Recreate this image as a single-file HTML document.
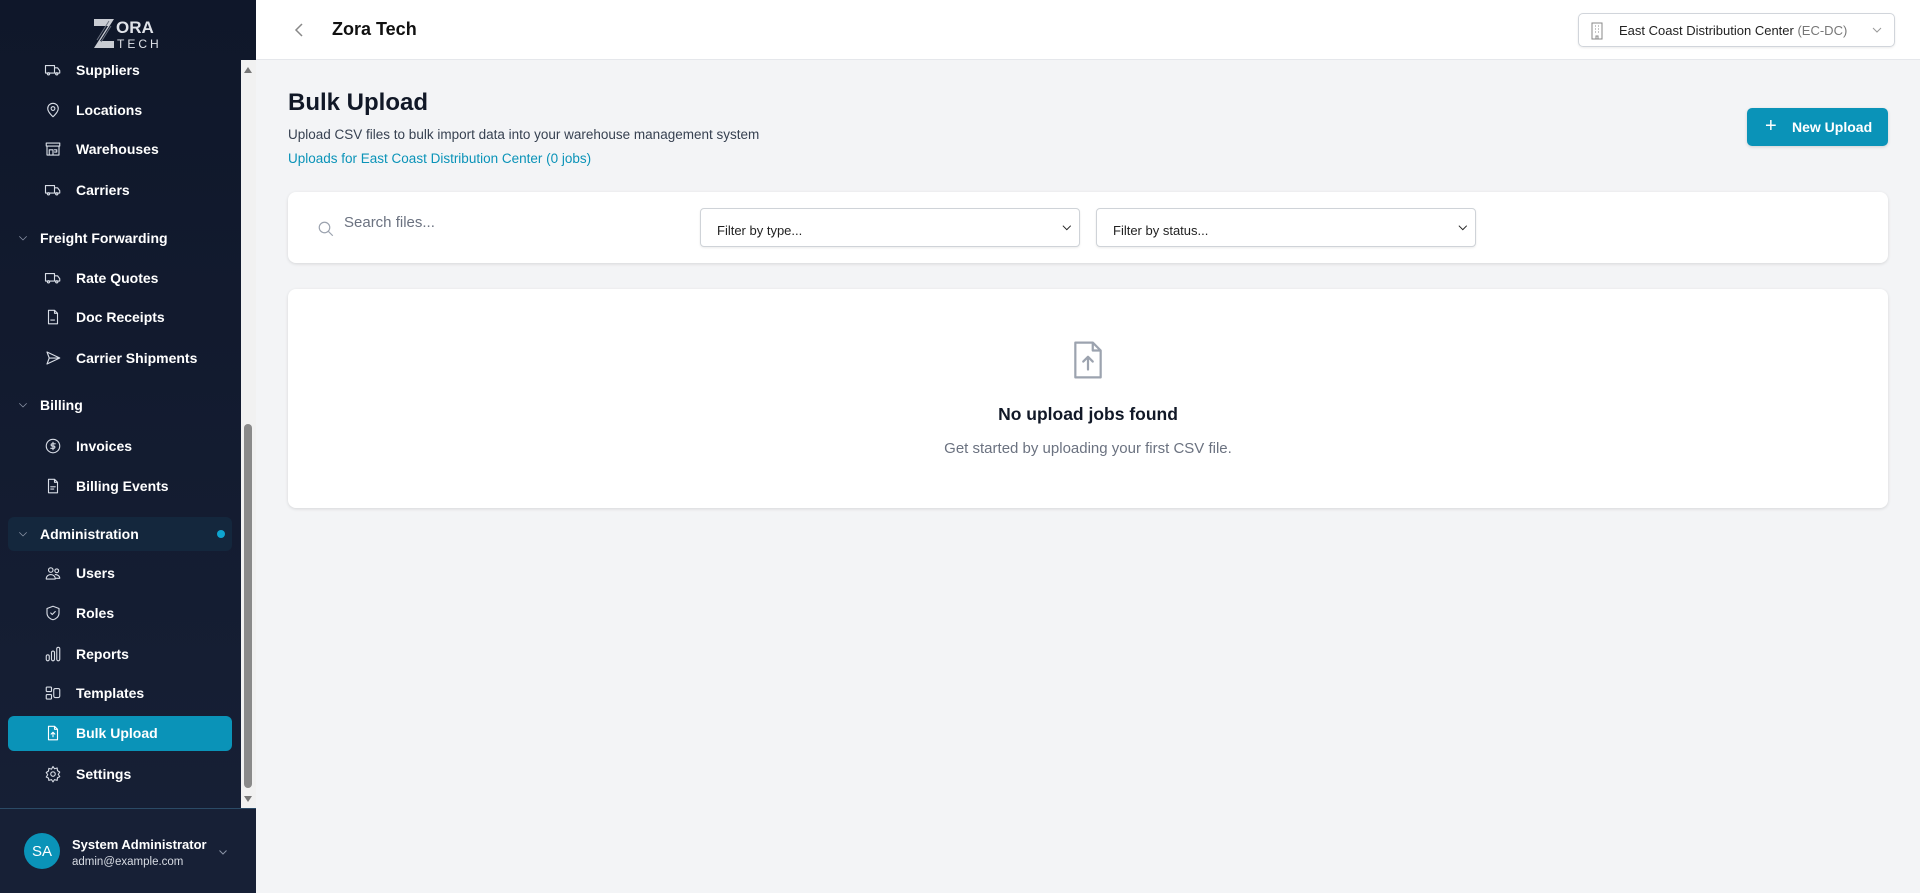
<!DOCTYPE html>
<html><head><meta charset="utf-8"><style>
*{box-sizing:border-box;margin:0;padding:0}
body{width:1920px;height:893px;overflow:hidden;font-family:"Liberation Sans",sans-serif;background:#f3f4f6;position:relative}
.sb{position:absolute;left:0;top:0;width:256px;height:893px;background:linear-gradient(#0f172a,#172036)}
.logo{position:absolute;left:92px;top:16px;width:74px;height:36px}
.scroll{position:absolute;left:241px;top:60px;width:15px;height:748px;background:#f1f1f1}
.thumb{position:absolute;left:244px;top:424px;width:8px;height:364px;background:#8a8a8a;border-radius:4px}
.item{position:absolute;left:0;height:34px;color:#fff;font-size:14px;font-weight:700;display:flex;align-items:center}
.item svg{position:absolute;left:44px;width:18px;height:18px;fill:none;stroke:#d8dde6;stroke-width:1.5;stroke-linecap:round;stroke-linejoin:round}
.item span{position:absolute;left:76px;white-space:nowrap}
.sec span{left:40px}
.sec svg{left:17px;width:12px;height:12px;stroke:#8b94a7}
.footer{position:absolute;left:0;top:808px;width:256px;height:85px;background:#172036;border-top:1px solid #2b4a66}
.hdr{position:absolute;left:256px;top:0;width:1664px;height:60px;background:#fff;border-bottom:1px solid #e5e7eb}
.card{position:absolute;background:#fff;border-radius:8px;box-shadow:0 1px 3px rgba(0,0,0,.12)}
.sel{position:absolute;top:16px;height:39px;border:1px solid #cfd3d8;border-radius:4px;background:#fff;box-shadow:0 1px 2px rgba(0,0,0,.08);font-size:13px;color:#222;padding:14px 16px}
.sel b{position:absolute;right:8px;top:12px;font-size:11px}
</style></head><body>
<div class="sb">
<svg class="logo" viewBox="0 0 74 36"><path d="M2 3h20l-14 22h14v7H2l14-22H2z" fill="#c9ccd3"/><path d="M5 24l12-19M9 26l10-16" stroke="#6b7280" stroke-width="1"/><text x="24" y="17" font-family="Liberation Sans" font-size="17" font-weight="700" fill="#dfe2e8">ORA</text><text x="25" y="32" font-family="Liberation Sans" font-size="12" fill="#dfe2e8" letter-spacing="3">TECH</text></svg>
<div class="item" style="top:53px"><svg viewBox="0 0 24 24"><path d="M2 6h12v10H2zM14 9h4l3 4v3h-7"/><circle cx="6" cy="17" r="1.5"/><circle cx="17" cy="17" r="1.5"/></svg><span>Suppliers</span></div>
<div class="item" style="top:93px"><svg viewBox="0 0 24 24"><path d="M12 21s-7-6-7-11a7 7 0 0114 0c0 5-7 11-7 11z"/><circle cx="12" cy="10" r="2.5"/></svg><span>Locations</span></div>
<div class="item" style="top:132px"><svg viewBox="0 0 24 24"><path d="M3 4h18v4H3zM4 8v12h16V8M7 20v-7h5v7M14 13h3v3h-3"/></svg><span>Warehouses</span></div>
<div class="item" style="top:173px"><svg viewBox="0 0 24 24"><path d="M2 6h12v10H2zM14 9h4l3 4v3h-7"/><circle cx="6" cy="17" r="1.5"/><circle cx="17" cy="17" r="1.5"/></svg><span>Carriers</span></div>
<div class="item sec" style="top:221px"><svg viewBox="0 0 24 24"><path d="M5 9l7 7 7-7"/></svg><span>Freight Forwarding</span></div>
<div class="item" style="top:261px"><svg viewBox="0 0 24 24"><path d="M2 6h12v10H2zM14 9h4l3 4v3h-7"/><circle cx="6" cy="17" r="1.5"/><circle cx="17" cy="17" r="1.5"/></svg><span>Rate Quotes</span></div>
<div class="item" style="top:300px"><svg viewBox="0 0 24 24"><path d="M6 3h8l4 4v14H6zM14 3v4h4M9 16h5"/></svg><span>Doc Receipts</span></div>
<div class="item" style="top:341px"><svg viewBox="0 0 24 24"><path d="M4 4l17 8-17 8 3-8zM7 12h14"/></svg><span>Carrier Shipments</span></div>
<div class="item sec" style="top:388px"><svg viewBox="0 0 24 24"><path d="M5 9l7 7 7-7"/></svg><span>Billing</span></div>
<div class="item" style="top:429px"><svg viewBox="0 0 24 24"><circle cx="12" cy="12" r="9"/><path d="M15 9h-4a1.5 1.5 0 000 3h2a1.5 1.5 0 010 3H9M12 7v10"/></svg><span>Invoices</span></div>
<div class="item" style="top:469px"><svg viewBox="0 0 24 24"><path d="M6 3h8l4 4v14H6zM14 3v4h4M9 13h6M9 16h4"/></svg><span>Billing Events</span></div>
<div style="position:absolute;left:8px;top:517px;width:224px;height:34px;background:#14273d;border-radius:6px"></div>
<div class="item sec" style="top:517px"><svg viewBox="0 0 24 24"><path d="M5 9l7 7 7-7"/></svg><span>Administration</span></div>
<div style="position:absolute;left:217px;top:530px;width:8px;height:8px;border-radius:50%;background:#0ea5d0"></div>
<div class="item" style="top:556px"><svg viewBox="0 0 24 24"><circle cx="9" cy="8" r="3"/><circle cx="17" cy="9" r="2.5"/><path d="M3 20c0-4 3-6 6-6s6 2 6 6zM15 14c3 0 6 2 6 5h-5"/></svg><span>Users</span></div>
<div class="item" style="top:596px"><svg viewBox="0 0 24 24"><path d="M12 3l8 3v6c0 5-4 8-8 9-4-1-8-4-8-9V6z"/><path d="M9 12l2 2 4-4"/></svg><span>Roles</span></div>
<div class="item" style="top:637px"><svg viewBox="0 0 24 24"><rect x="3" y="13" width="4" height="8" rx="2"/><rect x="10" y="8" width="4" height="13" rx="2"/><rect x="17" y="3" width="4" height="18" rx="2"/></svg><span>Reports</span></div>
<div class="item" style="top:676px"><svg viewBox="0 0 24 24"><rect x="3" y="4" width="7" height="6" rx="1"/><rect x="3" y="14" width="7" height="6" rx="1"/><rect x="13" y="6" width="8" height="12" rx="2"/></svg><span>Templates</span></div>
<div style="position:absolute;left:8px;top:716px;width:224px;height:35px;background:#0a93b8;border-radius:6px"></div>
<div class="item" style="top:716px"><svg viewBox="0 0 24 24" style="stroke:#fff"><path d="M6 3h8l4 4v14H6zM14 3v4h4M12 17v-6M9.5 13.5L12 11l2.5 2.5"/></svg><span>Bulk Upload</span></div>
<div class="item" style="top:757px"><svg viewBox="0 0 24 24"><circle cx="12" cy="12" r="3"/><path d="M12 2l2 3 3.5-1 .5 3.5 3 2-2 3 2 3-3 1.5-.5 3.5-3.5-1-2 3-2-3-3.5 1L6 17.5 3 16l2-3-2-3 3-2 .5-3.5 3.5 1z"/></svg><span>Settings</span></div>
<div class="scroll"></div><div class="thumb"></div>
<div style="position:absolute;left:244px;top:67px;width:0;height:0;border:4px solid transparent;border-bottom:6px solid #777;border-top:0"></div>
<div style="position:absolute;left:244px;top:796px;width:0;height:0;border:4px solid transparent;border-top:6px solid #777;border-bottom:0"></div>
<div class="footer">
<div style="position:absolute;left:24px;top:24px;width:36px;height:36px;border-radius:50%;background:#0a93b8;color:#fff;font-size:15px;display:flex;align-items:center;justify-content:center">SA</div>
<div style="position:absolute;left:72px;top:28px;color:#fff;font-size:13px;font-weight:700">System Administrator</div>
<div style="position:absolute;left:72px;top:47px;color:#d7dbe3;font-size:11.5px">admin@example.com</div>
<svg style="position:absolute;left:217px;top:37px" width="12" height="12" viewBox="0 0 24 24" fill="none" stroke="#8b94a7" stroke-width="2"><path d="M5 9l7 7 7-7"/></svg>
</div>
</div>
<div class="hdr">
<svg style="position:absolute;left:37px;top:22px" width="12" height="16" viewBox="0 0 12 16" fill="none" stroke="#888" stroke-width="1.5"><path d="M9 2L3 8l6 6"/></svg>
<div style="position:absolute;left:76px;top:19px;font-size:18px;font-weight:600;color:#111">Zora Tech</div>
<div style="position:absolute;left:1322px;top:13px;width:317px;height:34px;border:1px solid #d1d5db;border-radius:5px;box-shadow:0 1px 2px rgba(0,0,0,.08)">
<svg style="position:absolute;left:10px;top:8px" width="16" height="18" viewBox="0 0 16 18" fill="none" stroke="#888" stroke-width="1"><rect x="3" y="1" width="10" height="16"/><path d="M6 4h1M9 4h1M6 7h1M9 7h1M6 10h1M9 10h1M7 17v-3h2v3"/></svg>
<div style="position:absolute;left:40px;top:9px;font-size:13px;color:#222">East Coast Distribution Center <span style="color:#777">(EC-DC)</span></div>
<svg style="position:absolute;right:10px;top:10px" width="14" height="12" viewBox="0 0 24 24" fill="none" stroke="#999" stroke-width="2"><path d="M4 8l8 8 8-8"/></svg>
</div>
</div>
<div style="position:absolute;left:288px;top:89px;font-size:24px;font-weight:700;color:#111827">Bulk Upload</div>
<div style="position:absolute;left:288px;top:127px;font-size:13.5px;color:#374151">Upload CSV files to bulk import data into your warehouse management system</div>
<div style="position:absolute;left:288px;top:151px;font-size:13.5px;color:#0a93b8">Uploads for East Coast Distribution Center (0 jobs)</div>
<div style="position:absolute;left:1747px;top:108px;width:141px;height:38px;background:#0a93b8;border-radius:5px;color:#fff;font-size:14px;font-weight:700;box-shadow:0 1px 3px rgba(0,0,0,.15)">
<span style="position:absolute;left:18px;top:7px;font-size:20px;font-weight:400">+</span><span style="position:absolute;left:45px;top:11px">New Upload</span></div>
<div class="card" style="left:288px;top:192px;width:1600px;height:71px">
<svg style="position:absolute;left:29px;top:28px" width="18" height="18" viewBox="0 0 24 24" fill="none" stroke="#9ca3af" stroke-width="1.6"><circle cx="10" cy="10" r="7"/><path d="M15 15l6 6"/></svg>
<div style="position:absolute;left:56px;top:22px;font-size:15px;color:#6b7280">Search files...</div>
<div class="sel" style="left:412px;width:380px">Filter by type...<b>&#x2335;</b></div>
<div class="sel" style="left:808px;width:380px">Filter by status...<b>&#x2335;</b></div>
</div>
<div class="card" style="left:288px;top:289px;width:1600px;height:219px">
<svg style="position:absolute;left:781px;top:50px" width="38" height="42" viewBox="0 0 24 26" fill="none" stroke="#9ca3af" stroke-width="1.4" stroke-linejoin="round" stroke-linecap="round"><path d="M4 2h11l5 5v17H4zM15 2v5h5M12 19v-8M9 14l3-3 3 3"/></svg>
<div style="position:absolute;left:0;width:100%;top:115px;text-align:center;font-size:17.5px;font-weight:600;color:#111827">No upload jobs found</div>
<div style="position:absolute;left:0;width:100%;top:151px;text-align:center;font-size:15px;color:#6b7280">Get started by uploading your first CSV file.</div>
</div>
</body></html>
